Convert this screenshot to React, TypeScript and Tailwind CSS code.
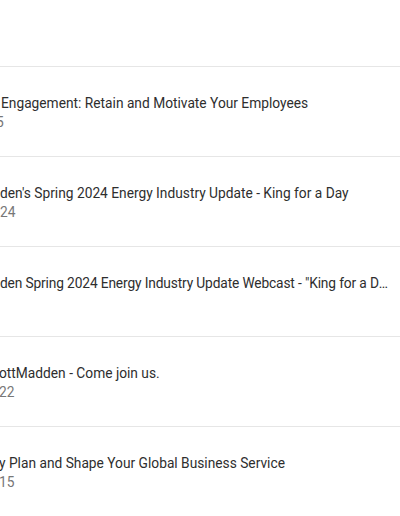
// Visible slice of a result list; the left edge of each row is scrolled out of view.
const ROWS = [
  { title: "Engagement: Retain and Motivate Your Employees", titleCls: "ml-[1px]", sub: "5", subMl: "-ml-[4px]" },
  { title: "den's Spring 2024 Energy Industry Update - King for a Day", titleCls: "ml-0", sub: "24", subMl: "ml-0" },
  { title: "den Spring 2024 Energy Industry Update Webcast - \"King for a Day\"", titleCls: "ml-0 tracking-[-0.14px]", sub: "", subMl: "ml-0" },
  { title: "ottMadden - Come join us.", titleCls: "-ml-[1px]", sub: "22", subMl: "-ml-[1px]" },
  { title: "y Plan and Shape Your Global Business Service", titleCls: "-ml-[1px]", sub: "15", subMl: "-ml-[1px]" },
];

export default function App() {
  return (
    <div className="w-[400px] h-[516px] overflow-hidden bg-white font-['Roboto',sans-serif]">
      <div className="h-[66px]" />
      {ROWS.map((r, i) => (
        <div key={i} className="h-[90px] border-t border-[#e6e6e6] pt-[26px] pr-[10px] overflow-hidden">
          <div className={"text-[13.75px] leading-[20px] text-[#2e2e2e] truncate " + r.titleCls}>{r.title}</div>
          {r.sub && <div className={"text-[13.75px] leading-[18px] text-[#777] whitespace-nowrap " + r.subMl}>{r.sub}</div>}
        </div>
      ))}
    </div>
  );
}
